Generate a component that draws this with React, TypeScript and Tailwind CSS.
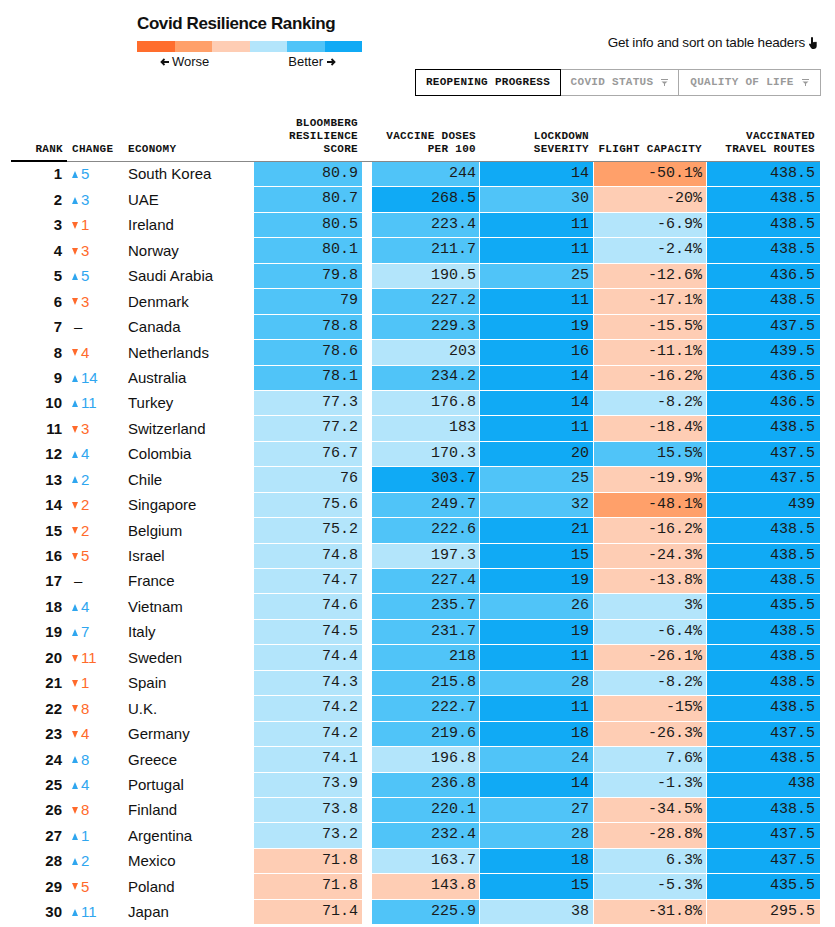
import React from "react";

const sans = { fontFamily: '"Liberation Sans", Arial, sans-serif' };
const mono = { fontFamily: '"Liberation Mono", "Courier New", monospace' };

const bg: Record<string, string> = {
  B: "bg-[#10aaf5]",
  M: "bg-[#50c4f8]",
  L: "bg-[#b3e5fb]",
  P: "bg-[#fecdb4]",
  O: "bg-[#ffa06a]",
};

type Row = [number, number, string, string, string, string, string, string, string];

// rank, change, economy, score, vaccine, lockdown, flight, routes, colours
const rows: Row[] = [
  [1, 5, "South Korea", "80.9", "244", "14", "-50.1%", "438.5", "MMBOB"],
  [2, 3, "UAE", "80.7", "268.5", "30", "-20%", "438.5", "MBMPB"],
  [3, -1, "Ireland", "80.5", "223.4", "11", "-6.9%", "438.5", "MMBLB"],
  [4, -3, "Norway", "80.1", "211.7", "11", "-2.4%", "438.5", "MMBLB"],
  [5, 5, "Saudi Arabia", "79.8", "190.5", "25", "-12.6%", "436.5", "MLMPB"],
  [6, -3, "Denmark", "79", "227.2", "11", "-17.1%", "438.5", "MMBPB"],
  [7, 0, "Canada", "78.8", "229.3", "19", "-15.5%", "437.5", "MMBPB"],
  [8, -4, "Netherlands", "78.6", "203", "16", "-11.1%", "439.5", "MLBPB"],
  [9, 14, "Australia", "78.1", "234.2", "14", "-16.2%", "436.5", "MMBPB"],
  [10, 11, "Turkey", "77.3", "176.8", "14", "-8.2%", "436.5", "LLBLB"],
  [11, -3, "Switzerland", "77.2", "183", "11", "-18.4%", "438.5", "LLBPB"],
  [12, 4, "Colombia", "76.7", "170.3", "20", "15.5%", "437.5", "LLBMB"],
  [13, 2, "Chile", "76", "303.7", "25", "-19.9%", "437.5", "LBMPB"],
  [14, -2, "Singapore", "75.6", "249.7", "32", "-48.1%", "439", "LMMOB"],
  [15, -2, "Belgium", "75.2", "222.6", "21", "-16.2%", "438.5", "LMBPB"],
  [16, -5, "Israel", "74.8", "197.3", "15", "-24.3%", "438.5", "LLBPB"],
  [17, 0, "France", "74.7", "227.4", "19", "-13.8%", "438.5", "LMBPB"],
  [18, 4, "Vietnam", "74.6", "235.7", "26", "3%", "435.5", "LMMLB"],
  [19, 7, "Italy", "74.5", "231.7", "19", "-6.4%", "438.5", "LMBLB"],
  [20, -11, "Sweden", "74.4", "218", "11", "-26.1%", "438.5", "LMBPB"],
  [21, -1, "Spain", "74.3", "215.8", "28", "-8.2%", "438.5", "LMMLB"],
  [22, -8, "U.K.", "74.2", "222.7", "11", "-15%", "438.5", "LMBPB"],
  [23, -4, "Germany", "74.2", "219.6", "18", "-26.3%", "437.5", "LMBPB"],
  [24, 8, "Greece", "74.1", "196.8", "24", "7.6%", "438.5", "LLMLB"],
  [25, 4, "Portugal", "73.9", "236.8", "14", "-1.3%", "438", "LMBLB"],
  [26, -8, "Finland", "73.8", "220.1", "27", "-34.5%", "438.5", "LMMPB"],
  [27, 1, "Argentina", "73.2", "232.4", "28", "-28.8%", "437.5", "LMMPB"],
  [28, 2, "Mexico", "71.8", "163.7", "18", "6.3%", "437.5", "PLBLB"],
  [29, -5, "Poland", "71.8", "143.8", "15", "-5.3%", "435.5", "PPBLB"],
  [30, 11, "Japan", "71.4", "225.9", "38", "-31.8%", "295.5", "PMLPP"],
];

function Filter() {
  return (
    <svg width="7" height="7" viewBox="0 0 7 7" className="ml-2">
      <rect x="0" y="0" width="7" height="1" fill="#9a9a9a" />
      <path d="M0.5 2.5H6.5L4 4.8V7H3V4.8Z" fill="#9a9a9a" />
    </svg>
  );
}

function Change({ v }: { v: number }) {
  if (v === 0) return <span className="ml-[2px] text-[#111]">–</span>;
  const up = v > 0;
  return (
    <span className={`flex items-center ${up ? "text-[#2fa6ef]" : "text-[#ff6a2b]"}`}>
      <svg width="6" height="7" viewBox="0 0 6 7" className="mr-[3px]">
        {up ? <path d="M3 0L6 7H0Z" fill="currentColor" /> : <path d="M0 0H6L3 7Z" fill="currentColor" />}
      </svg>
      {Math.abs(v)}
    </span>
  );
}

export default function App() {
  return (
    <div className="w-[835px] min-h-[927px] bg-white text-[#111]" style={sans}>
      <div className="flex pt-[14px] pr-[14px]">
        <div className="ml-[137px] w-[225px]">
          <div className="text-[17px] leading-[20px] font-bold tracking-[-0.4px]">Covid Resilience Ranking</div>
          <div className="mt-[7px] flex h-[11px]">
            <div className="flex-1 bg-[#ff6d2d]" />
            <div className="flex-1 bg-[#ffa06a]" />
            <div className="flex-1 bg-[#fecdb4]" />
            <div className="flex-1 bg-[#b3e5fb]" />
            <div className="flex-1 bg-[#50c4f8]" />
            <div className="flex-1 bg-[#10aaf5]" />
          </div>
          <div className="mt-[2px] flex justify-between pl-[23px] pr-[26px] text-[13px] leading-[16px]">
            <span className="flex items-center">
              <svg width="9" height="8" viewBox="0 0 9 8" className="mr-[3px]">
                <path d="M9 4H2M4.5 1L1.5 4L4.5 7" stroke="#111" strokeWidth="1.8" fill="none" />
              </svg>
              Worse
            </span>
            <span className="flex items-center">
              Better
              <svg width="9" height="8" viewBox="0 0 9 8" className="ml-[4px]">
                <path d="M0 4H7M4.5 1L7.5 4L4.5 7" stroke="#111" strokeWidth="1.8" fill="none" />
              </svg>
            </span>
          </div>
        </div>
        <div className="ml-auto flex flex-col items-end">
          <div className="mt-[20.5px] flex items-center text-[13.5px] leading-[16px] tracking-[-0.2px]">
            Get info and sort on table headers
            <svg width="10" height="12" viewBox="0 0 10 12" className="ml-[3px] mr-[3px]">
              <path
                d="M3 1a1 1 0 0 1 2 0v4.3h.4a.8.8 0 0 1 1.5 0h.2a.8.8 0 0 1 1.6.3V9c0 1.7-1.3 3-3 3H5.2c-1 0-1.8-.5-2.3-1.3L1.2 7.9a.9.9 0 0 1 1.4-1.1L3 7.3z"
                fill="#111"
              />
            </svg>
          </div>
          <div className="mt-[18.5px] flex h-[27px] text-[11px] font-bold tracking-[0.3px]" style={mono}>
            <div className="flex w-[146px] items-center justify-center border border-black text-[#111]">
              REOPENING PROGRESS
            </div>
            <div className="flex w-[118px] items-center justify-center border-y border-r border-[#aaa] text-[#9a9a9a]">
              COVID STATUS
              <Filter />
            </div>
            <div className="flex w-[142px] items-center justify-center border-y border-r border-[#aaa] text-[#9a9a9a]">
              QUALITY OF LIFE
              <Filter />
            </div>
          </div>
        </div>
      </div>

      <div className="mt-[21px] pl-[11px]">
        <div className="flex items-end text-[11px] leading-[13px] font-bold tracking-[0.3px]" style={mono}>
          <div className="w-[56px] border-b-2 border-black pb-[4px] pr-[4px] text-right">RANK</div>
          <div className="w-[61px] border-b border-[#888] pb-[5px] pl-[5px]">CHANGE</div>
          <div className="w-[126px] border-b border-[#888] pb-[5px]">ECONOMY</div>
          <div className="w-[108px] border-b border-[#888] pb-[5px] pr-[4px] text-right">
            BLOOMBERG
            <br />
            RESILIENCE
            <br />
            SCORE
          </div>
          <div className="w-[10px] border-b border-[#888] pb-[5px]" />
          <div className="w-[107px] border-b border-[#888] pb-[5px] pr-[3px] text-right">
            VACCINE DOSES
            <br />
            PER 100
          </div>
          <div className="w-[114px] border-b border-[#888] pb-[5px] pr-[4px] text-right">
            LOCKDOWN
            <br />
            SEVERITY
          </div>
          <div className="w-[113px] border-b border-[#888] pb-[5px] pr-[4px] text-right">FLIGHT CAPACITY</div>
          <div className="w-[114px] border-b border-[#888] pb-[5px] pr-[5px] text-right">
            VACCINATED
            <br />
            TRAVEL ROUTES
          </div>
        </div>

        {rows.map((r) => {
          const c = r[8];
          return (
            <div key={r[0]} className="flex h-[25.45px] text-[15px]">
              <div className="flex w-[56px] items-center justify-end pr-[5px] font-bold">{r[0]}</div>
              <div className="flex w-[61px] items-center pl-[5px]">
                <Change v={r[1]} />
              </div>
              <div className="flex w-[126px] items-center">{r[2]}</div>
              <div style={mono} className={`flex w-[108px] items-center justify-end border-b border-white pr-[4px] text-[#1a1a1a] ${bg[c[0]]}`}>
                {r[3]}
              </div>
              <div className="w-[10px]" />
              <div style={mono} className={`flex w-[107px] items-center justify-end border-b border-white pr-[3px] text-[#1a1a1a] ${bg[c[1]]}`}>
                {r[4]}
              </div>
              <div style={mono} className={`flex w-[114px] items-center justify-end border-b border-l border-white pr-[4px] text-[#1a1a1a] ${bg[c[2]]}`}>
                {r[5]}
              </div>
              <div style={mono} className={`flex w-[113px] items-center justify-end border-b border-l border-white pr-[4px] text-[#1a1a1a] ${bg[c[3]]}`}>
                {r[6]}
              </div>
              <div style={mono} className={`flex w-[114px] items-center justify-end border-b border-l border-white pr-[5px] text-[#1a1a1a] ${bg[c[4]]}`}>
                {r[7]}
              </div>
            </div>
          );
        })}
      </div>
    </div>
  );
}
